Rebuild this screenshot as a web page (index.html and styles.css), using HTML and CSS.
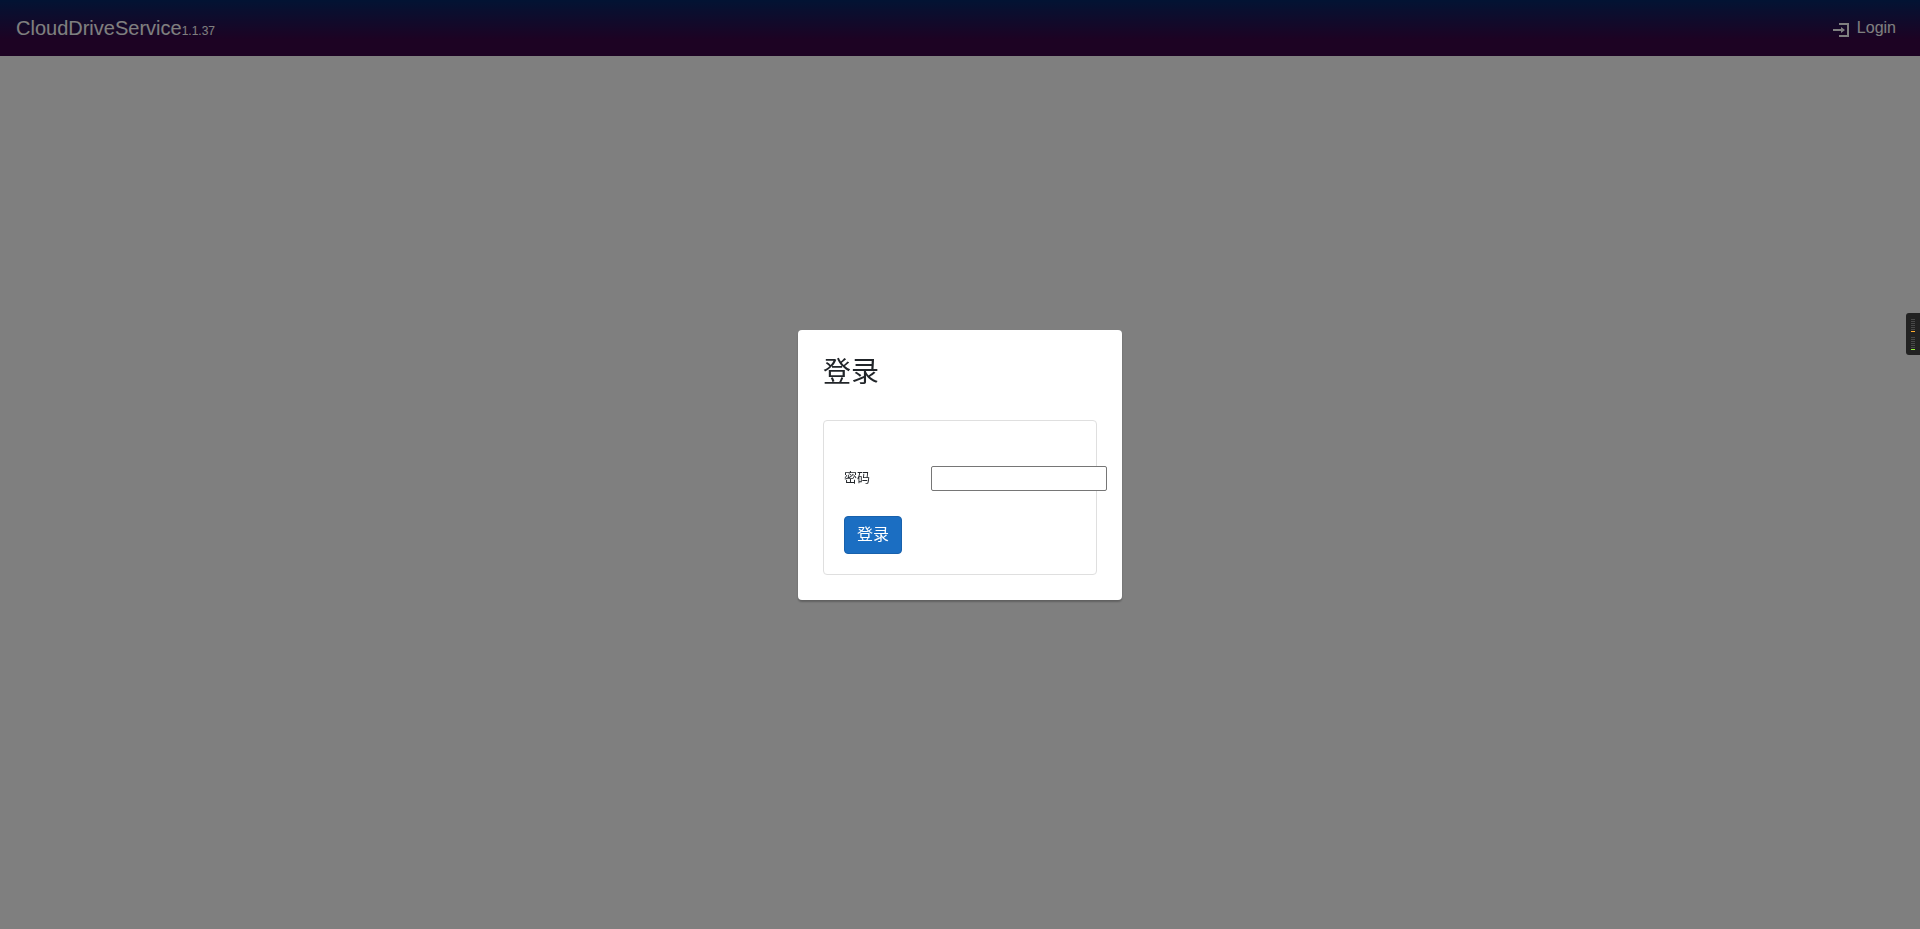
FILE: index.html
```html
<!DOCTYPE html>
<html lang="zh-CN">
<head>
  <meta charset="UTF-8">
  <title>CloudDriveService</title>
  <link rel="stylesheet" href="styles.css">
</head>
<body>
  <nav class="navbar">
    <a class="brand" href="#">CloudDriveService<span class="version">1.1.37</span></a>
    <a class="login-link" href="#">
      <svg class="login-icon" viewBox="0 0 8 8" width="16" height="16" aria-hidden="true">
        <path fill="currentColor" d="M3 0v1h4v5h-4v1h5v-7h-5zm1 2v1h-4v1h4v1l2-1.500-2-1.500z"/>
      </svg>
      Login
    </a>
  </nav>

  <!-- Login Modal -->
  <div class="modal-overlay">
    <div class="modal" role="dialog" aria-labelledby="modalTitle">
      <h3 class="modal-title" id="modalTitle">登录</h3>
      <form class="login-form" id="loginForm">
        <div class="form-row">
          <label for="password">密码</label>
          <input type="password" id="password" name="password">
        </div>
        <button type="submit" class="btn-primary">登录</button>
      </form>
    </div>
  </div>

  <!-- Activity meter on the window edge -->
  <div class="meter">
    <div class="meter-group">
      <i></i><i></i><i></i><i></i><i></i><i></i><i class="orange"></i>
    </div>
    <div class="meter-group">
      <i></i><i></i><i></i><i></i><i></i><i></i><i class="green"></i>
    </div>
  </div>
</body>
</html>
```
FILE: styles.css
```css
* {
  box-sizing: border-box;
}

body {
  margin: 0;
  min-height: 100vh;
  background: white;
  color: #212529;
  font-family: "Liberation Sans", Arial, "Noto Sans CJK SC", sans-serif;
  font-size: 16px;
  line-height: 24px;
}

.navbar {
  display: flex;
  justify-content: space-between;
  align-items: center;
  height: 56px;
  padding: 0 24px 0 16px;
  background-image: linear-gradient(180deg, #052767 0%, #3a0647 70%);
}

.navbar a {
  color: white;
  text-decoration: none;
}

.brand {
  padding-top: 2px;
  font-size: 20px;
}

.version {
  font-size: 12px;
}

.login-link {
  display: flex;
  align-items: center;
  gap: 8px;
}

.login-icon {
  margin-top: 6px;
}

.modal-overlay {
  position: fixed;
  inset: 0;
  display: flex;
  justify-content: center;
  align-items: center;
  background: rgba(0, 0, 0, 0.5);
}

.modal {
  width: 324px;
  padding: 25px;
  background: white;
  border-radius: 4px;
  box-shadow: 0 2px 2px rgba(0, 0, 0, 0.25);
}

.modal-title {
  margin: 0 0 29px;
  font-size: 28px;
  font-weight: normal;
  line-height: 36px;
}

.login-form {
  padding: 45px 20px 20px;
  border: 1px solid #dfdfdf;
  border-radius: 4px;
}

.form-row {
  display: grid;
  grid-template-columns: 87px 176px;
  align-items: center;
  margin-bottom: 25px;
}

.form-row label {
  font-size: 13px;
}

.form-row input {
  height: 25px;
  padding: 1px 2px;
  border: 1px solid #767676;
  border-radius: 2px;
}

.btn-primary {
  display: block;
  padding: 6px 12px;
  background-color: #1b6ec2;
  color: white;
  border: 1px solid #1861ac;
  border-radius: 4px;
  font-family: inherit;
  font-size: 16px;
  line-height: 24px;
  cursor: pointer;
}

.btn-primary:hover {
  background-color: #1861ac;
}

.meter {
  position: fixed;
  top: 313px;
  right: 0;
  width: 14px;
  padding: 6px 5px 5px;
  background: #222;
  border-radius: 3px 0 0 3px;
}

.meter-group {
  display: grid;
  gap: 1px;
}

.meter-group + .meter-group {
  margin-top: 5px;
}

.meter i {
  height: 1px;
  background: #484848;
}

.meter .orange {
  background: #ffab2e;
}

.meter .green {
  background: #94f03a;
}
```
